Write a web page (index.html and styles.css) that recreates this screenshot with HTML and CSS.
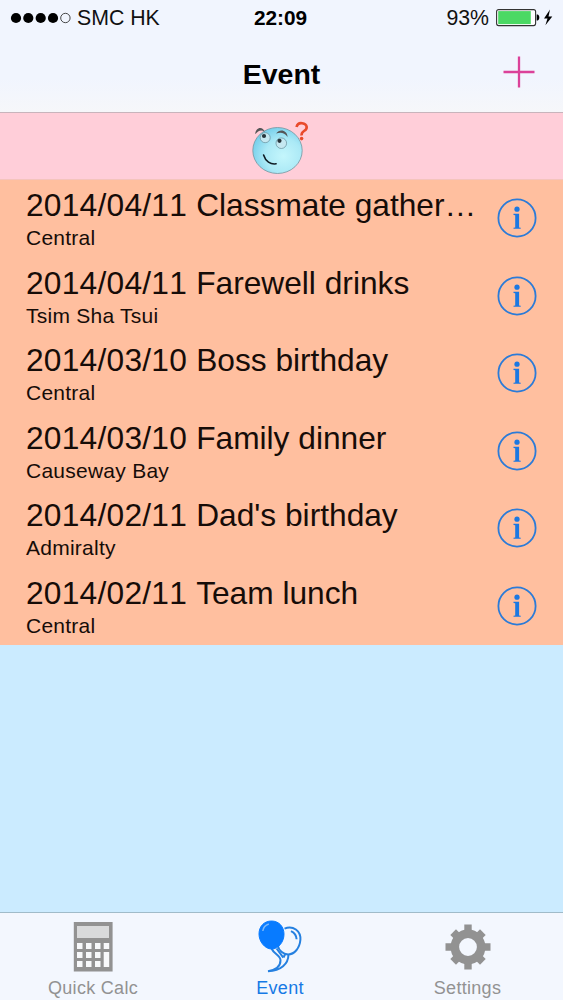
FILE: index.html
```html
<!DOCTYPE html>
<html lang="en">
<head>
<meta charset="utf-8">
<title>Event</title>
<link rel="stylesheet" href="styles.css">
</head>
<body>
<svg width="0" height="0" class="defs">
  <symbol id="info" viewBox="0 0 40 40">
    <circle cx="20" cy="20" r="18.6" fill="none" stroke="#2b7bd8" stroke-width="1.8"/>
    <circle cx="20" cy="11.2" r="2.6" fill="#1c78e2"/>
    <path d="M16.5 15.8h5.6v13.6l1.6.3v1.1h-7.2v-1.1l1.7-.3V17.3l-1.7-.4z" fill="#1c78e2"/>
  </symbol>
</svg>
<div class="screen">
  <header class="top">
    <div class="status">
      <div class="carrier">
        <svg width="62" height="14" viewBox="0 0 62 14"><g fill="#000"><circle cx="6" cy="7" r="5.1"/><circle cx="18.3" cy="7" r="5.1"/><circle cx="30.7" cy="7" r="5.1"/><circle cx="43" cy="7" r="5.1"/></g><circle cx="55.4" cy="7" r="4.7" fill="none" stroke="#333" stroke-width=".9"/></svg>
        <span>SMC HK</span>
      </div>
      <div class="clock">22:09</div>
      <div class="power">
        <span>93%</span>
        <svg width="60" height="20" viewBox="0 0 60 20"><rect x=".6" y="1.6" width="39" height="16" rx="2" fill="#fff" stroke="#333" stroke-width="1.1"/><rect x="2.2" y="3.1" width="32.6" height="13" fill="#4bd964"/><path d="M40.7 6.5h1c1.2.6 1.6 1.6 1.6 3s-.4 2.4-1.6 3h-1z"/><path d="M54 1.6 48 10.6h3.5L49.4 17.2 56.3 8.5h-3.8z"/></svg>
      </div>
    </div>
    <div class="navbar">
      <h1>Event</h1>
      <svg class="add" width="32" height="32" viewBox="0 0 32 32"><path d="M.5 16h31M16 .5v31" stroke="#db4199" stroke-width="2.3"/></svg>
    </div>
  </header>
  <div class="banner">
    <svg width="60" height="56" viewBox="0 0 60 56">
      <defs><radialGradient id="face" cx=".62" cy=".62" r=".68"><stop offset="0" stop-color="#c4f6fc"/><stop offset=".55" stop-color="#abe9f6"/><stop offset="1" stop-color="#72cdea"/></radialGradient></defs>
      <ellipse cx="27.5" cy="31.5" rx="24.7" ry="23" fill="url(#face)" stroke="#7396a0" stroke-width=".8"/>
      <circle cx="15.2" cy="18.7" r="5" fill="#c5e8f1" stroke="#658e9b" stroke-width=".7"/>
      <circle cx="31.3" cy="24.2" r="5.3" fill="#c5e8f1" stroke="#658e9b" stroke-width=".7"/>
      <circle cx="14" cy="17" r="2.1" fill="#28343b"/><circle cx="29.5" cy="21.8" r="2.1" fill="#28343b"/>
      <path d="M5.3 15.3C5 8.7 12.6 6.1 14.8 12.9 11.6 10.4 8.2 11.2 5.3 15.3zM26.1 14.4c3.6-5.2 11.2-3.3 11.5 3.5-3.2-4.4-6.7-5-11.5-3.5z" fill="#555557"/>
      <path d="M13.6 36c1.9 6.4 6.9 9.6 12.5 8.8" fill="none" stroke="#101c24" stroke-width="1.6" stroke-linecap="round"/>
      <path d="M46.5 8c.8-3.1 3-4.2 5.7-3.8 5.2.7 6 5.3 1.8 7.8-2 1.2-2.7 2.2-2.4 4.5" fill="none" stroke="#e94a2b" stroke-width="2.6"/><circle cx="51.6" cy="19.6" r="1.8" fill="#e94a2b"/>
    </svg>
  </div>
  <main class="events">
    <article class="row"><div class="text"><h2><span class="date">2014/04/11 </span>Classmate gather…</h2><p>Central</p></div><svg class="info"><use href="#info"/></svg></article>
    <article class="row"><div class="text"><h2><span class="date">2014/04/11 </span>Farewell drinks</h2><p>Tsim Sha Tsui</p></div><svg class="info"><use href="#info"/></svg></article>
    <article class="row"><div class="text"><h2><span class="date">2014/03/10 </span>Boss birthday</h2><p>Central</p></div><svg class="info"><use href="#info"/></svg></article>
    <article class="row"><div class="text"><h2><span class="date">2014/03/10 </span>Family dinner</h2><p>Causeway Bay</p></div><svg class="info"><use href="#info"/></svg></article>
    <article class="row"><div class="text"><h2><span class="date">2014/02/11 </span>Dad's birthday</h2><p>Admiralty</p></div><svg class="info"><use href="#info"/></svg></article>
    <article class="row"><div class="text"><h2><span class="date">2014/02/11 </span>Team lunch</h2><p>Central</p></div><svg class="info"><use href="#info"/></svg></article>
  </main>
  <nav class="tabs">
    <div class="tab">
      <svg width="40" height="50" viewBox="0 0 40 50"><path d="M.8 0h38.8v49.5H.8z" fill="#929292"/><path d="M4 4h32v12H4z" fill="#d9dadb"/><path d="M4 21h5.5v6H4zM13 21h5.5v6H13zM22 21h5.5v6H22zM30.7 21h5.5v6h-5.5zM4 30h5.5v6H4zM13 30h5.5v6H13zM22 30h5.5v6H22zM4 39h5.5v6H4zM13 39h5.5v6H13zM22 39h5.5v6H22zM30.7 30h5.5v15h-5.5z" fill="#f8f9fb"/></svg>
      <span>Quick Calc</span>
    </div>
    <div class="tab active">
      <svg width="44" height="54" viewBox="0 0 44 54" fill="none" stroke="#2580e0" stroke-width="2"><path d="M26.5 8.6C35 4.9 43 11 42.4 19.8c-.7 8.4-6 14.6-12.3 14.6-5.2 0-9.2-4-10.3-8.8M33 11.2c3.4 1.6 5.4 4.4 5.6 8.1"/><path d="M30.5 34.5c-.2 9.6-7.5 16.3-20.5 16.8 7-1.2 12.5-4.8 12.5-11 0-4.8-6.5-6.2-9-11.8"/><path d="m18.6 28.5 6.7 9.1M27 34.5l-1.5 3"/><path d="M13.5 1C21 1 26 6.8 26 14.2 26 22 20.3 29 13.7 29 6.8 29 1 21.6 1 14 1 6.5 6 1 13.5 1z" fill="#087bff" stroke="#087bff" stroke-width="1"/><path d="M4.8 11c.5-3.4 2.8-6 6-7" stroke="#7db9f8" stroke-width="1.5"/></svg>
      <span>Event</span>
    </div>
    <div class="tab">
      <svg width="46" height="46" viewBox="-23 -23 46 46"><g fill="#929292"><path id="tooth" d="M-3.7-22.5h7.4v6l2 3h-11.4l2-3z"/><use href="#tooth" transform="rotate(90)"/><use href="#tooth" transform="rotate(180)"/><use href="#tooth" transform="rotate(270)"/><path id="corner" d="M-4-21h8v8h-8z" transform="rotate(45)"/><use href="#corner" transform="rotate(90)"/><use href="#corner" transform="rotate(180)"/><use href="#corner" transform="rotate(270)"/></g><circle r="13.2" fill="none" stroke="#929292" stroke-width="8.6"/></svg>
      <span>Settings</span>
    </div>
  </nav>
</div>
</body>
</html>
```
FILE: styles.css
```css
* { box-sizing: border-box; margin: 0; padding: 0; }
body { font-family: "Liberation Sans", Arial, sans-serif; color: #160c08; }
svg { display: block; flex: none; }
.defs { position: absolute; }
.screen { width: 563px; height: 1000px; display: flex; flex-direction: column; background: #cbebff; overflow: hidden; }
.top { height: 113px; background: linear-gradient(#f1f5fe 70%, #f6f7fa); border-bottom: 1px solid #c8b4bc; flex: none; }
.status { height: 36px; display: grid; grid-template-columns: 1fr 60px 1fr; align-items: center; padding: 0 9px 0 11px; font-size: 21.3px; line-height: 24px; color: #111; }
.carrier, .power { display: flex; align-items: center; }
.carrier { gap: 5px; }
.carrier svg { margin-left: -1px; }
.power { justify-content: flex-end; gap: 7px; margin-right: -2px; }
.clock { font-weight: bold; font-size: 20.8px; text-align: center; color: #000; white-space: nowrap; margin-left: -4px; }
.navbar { height: 76px; display: grid; grid-template-columns: 1fr auto 1fr; align-items: center; padding: 0 28px; }
.navbar h1 { grid-column: 2; font-size: 28.5px; line-height: 34px; color: #000; }
.add { justify-self: end; margin-top: -4px; }
.banner { height: 67px; flex: none; display: flex; justify-content: center; align-items: flex-start; padding: 6px 4px 0 0; background: #ffced9; border-bottom: 1px solid #f4c4bd; }
.events { background: #ffbf9f; flex: none; }
.row { height: 77.5px; display: flex; justify-content: space-between; padding: 0 26px; }
.text { padding-top: 7.4px; white-space: nowrap; }
.text h2 { font-size: 31.7px; font-weight: normal; line-height: 36px; }
.date { font-kerning: none; letter-spacing: .25px; }
.text p { font-size: 21px; line-height: 24px; margin-top: 3px; letter-spacing: .25px; }
.info { width: 40px; height: 40px; margin-top: 18px; }
.tabs { height: 88px; margin-top: auto; display: grid; grid-template-columns: 186px 188px 187px; background: #f3f7fe; border-top: 1px solid #a0bbc9; }
.tab { display: grid; grid-template-rows: 64px 22px; justify-items: center; color: #929292; font-size: 18px; line-height: 22px; letter-spacing: .3px; }
.tab svg { align-self: start; margin-top: 9px; }
.tab:nth-child(2) svg { margin-top: 7px; }
.tab:nth-child(3) svg { margin-top: 11px; }
.tab.active { color: #1679e5; }
```
